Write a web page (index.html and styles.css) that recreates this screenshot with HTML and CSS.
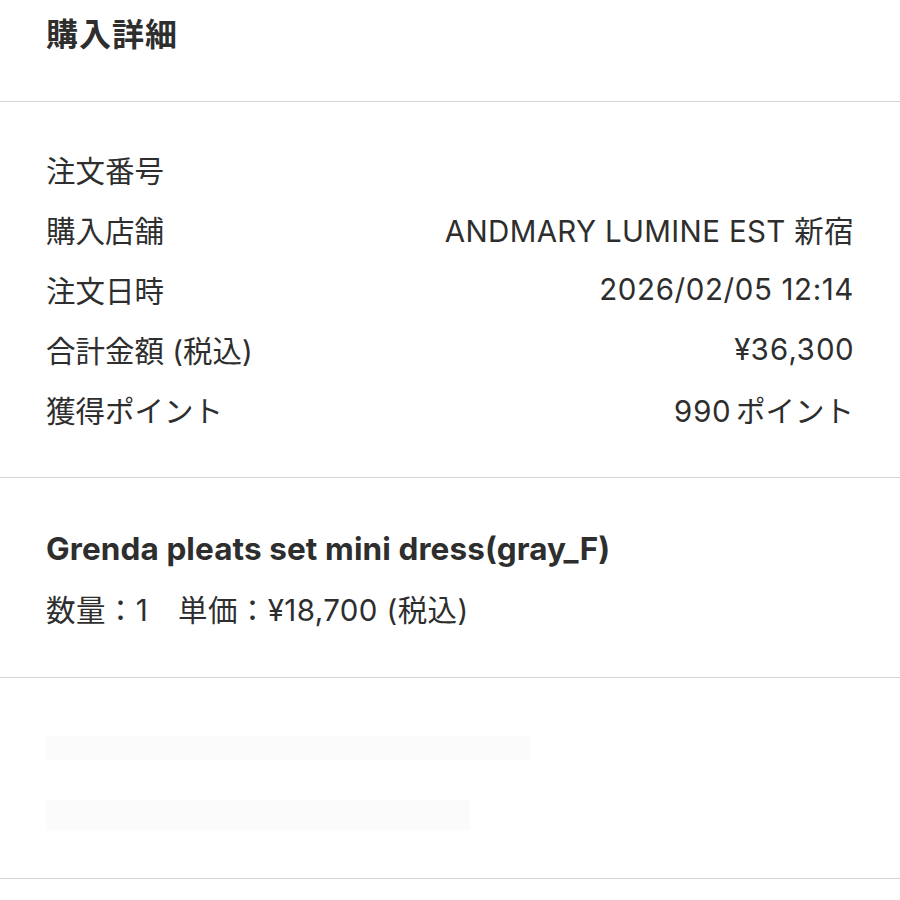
FILE: index.html
```html
<!DOCTYPE html>
<html lang="ja">
<head>
<meta charset="utf-8">
<link rel="stylesheet" href="styles.css">
</head>
<body>
<div class="page">
  <header class="header">
    <h1 class="title">購入詳細</h1>
  </header>
  <section class="section details">
    <div class="row"><span class="label">注文番号</span><span class="value"></span></div>
    <div class="row"><span class="label">購入店舗</span><span class="value store">ANDMARY LUMINE EST 新宿</span></div>
    <div class="row"><span class="label">注文日時</span><span class="value date">2026/02/05 12:14</span></div>
    <div class="row"><span class="label">合計金額 (税込)</span><span class="value tab">¥36,300</span></div>
    <div class="row"><span class="label">獲得ポイント</span><span class="value tab"><span class="num">990</span>ポイント</span></div>
  </section>
  <section class="section item">
    <div class="item-name">Grenda pleats set mini dress(gray_F)</div>
    <div class="item-meta">数量：1　単価：¥18,700 (税込)</div>
  </section>
  <section class="section hidden">
    <div class="ghost ghost-1"></div>
    <div class="ghost ghost-2"></div>
  </section>
</div>
</body>
</html>
```
FILE: styles.css
```css
* { box-sizing: border-box; }
html, body { margin: 0; padding: 0; background: #fff; }
body {
  font-family: Inter, "Noto Sans CJK JP", sans-serif;
  color: #2e2e2e;
}
.page { width: 900px; }
.header {
  height: 102px;
  padding: 12px 46px 0;
  border-bottom: 1.5px solid #d4d4d4;
}
.title {
  margin: 0;
  font-size: 32px;
  font-weight: 700;
  line-height: 40px;
  font-family: "Noto Sans CJK JP", sans-serif;
  letter-spacing: 1px;
}
.section {
  padding: 0 46px;
  border-bottom: 1.5px solid #d4d4d4;
}
.details {
  padding-top: 37px;
  padding-bottom: 38px;
}
.row {
  display: flex;
  justify-content: space-between;
  align-items: center;
  height: 60px;
  font-size: 29.5px;
  font-weight: 400;
}
.value { text-align: right; }
.tab { font-variant-numeric: tabular-nums; }
.date { letter-spacing: 0.6px; }
.store { letter-spacing: 0.35px; }
.num { margin-right: 5px; }
.item {
  padding-top: 51px;
  padding-bottom: 47px;
}
.item-name {
  font-size: 31.5px;
  font-weight: 700;
  line-height: 40px;
  letter-spacing: 0.1px;
}
.item-meta {
  margin-top: 21px;
  font-size: 29.5px;
  line-height: 40px;
  letter-spacing: 0.4px;
}
.hidden {
  height: 201px;
  padding-top: 58px;
}
.ghost { background: #fbfbfb; height: 24px; }
.ghost-1 { width: 484px; }
.ghost-2 { width: 424px; margin-top: 40px; height: 30px; }
```
